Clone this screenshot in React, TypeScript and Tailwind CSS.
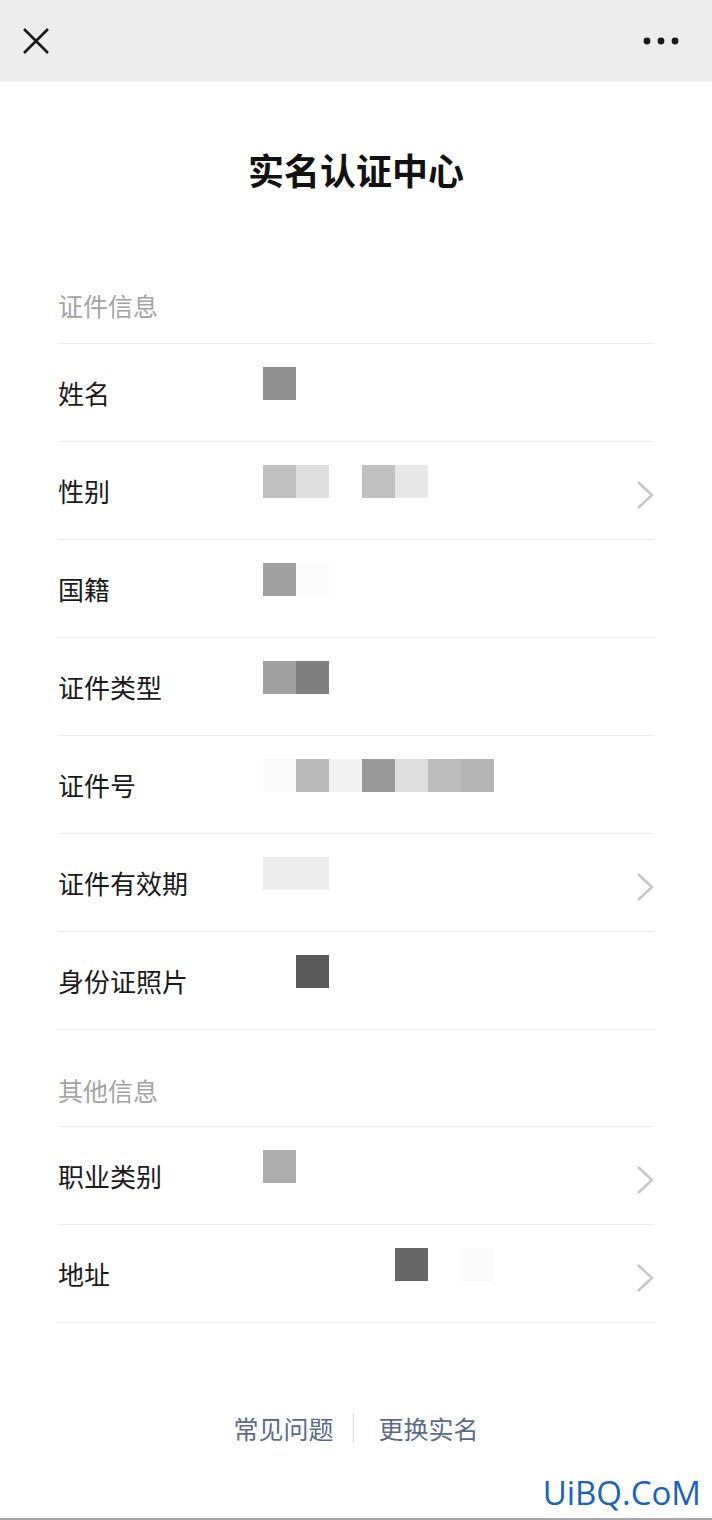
import React from 'react';

type Cell = { c: string };
type Row = { label: string; cells: Cell[]; arrow?: boolean };

const CJK = { fontFamily: '"Noto Sans CJK SC", "Noto Sans", sans-serif' };

const idRows: Row[] = [
  { label: '姓名', cells: [{ c: 'bg-[#8f8f8f]' }] },
  {
    label: '性别',
    arrow: true,
    cells: [{ c: 'bg-[#c0c0c0]' }, { c: 'bg-[#dedede]' }, { c: 'bg-white' }, { c: 'bg-[#c0c0c0]' }, { c: 'bg-[#e8e8e8]' }],
  },
  { label: '国籍', cells: [{ c: 'bg-[#a0a0a0]' }, { c: 'bg-[#fbfbfb]' }] },
  { label: '证件类型', cells: [{ c: 'bg-[#a0a0a0]' }, { c: 'bg-[#7f7f7f]' }] },
  {
    label: '证件号',
    cells: [
      { c: 'bg-[#fafafa]' },
      { c: 'bg-[#bbbbbb]' },
      { c: 'bg-[#f3f3f3]' },
      { c: 'bg-[#999999]' },
      { c: 'bg-[#dedede]' },
      { c: 'bg-[#bdbdbd]' },
      { c: 'bg-[#b5b5b5]' },
    ],
  },
  { label: '证件有效期', arrow: true, cells: [{ c: 'bg-[#ececec]' }, { c: 'bg-[#ececec]' }] },
  { label: '身份证照片', cells: [{ c: 'bg-white' }, { c: 'bg-[#595959]' }] },
];

const otherRows: Row[] = [
  { label: '职业类别', arrow: true, cells: [{ c: 'bg-[#adadad]' }] },
  {
    label: '地址',
    arrow: true,
    cells: [{ c: 'bg-white' }, { c: 'bg-white' }, { c: 'bg-white' }, { c: 'bg-white' }, { c: 'bg-[#666666]' }, { c: 'bg-white' }, { c: 'bg-[#fafafa]' }],
  },
];

const Chevron = () => (
  <svg width="18" height="30" viewBox="0 0 18 30" className="mt-2">
    <polyline points="2,2 16,15 2,28" fill="none" stroke="#c6c6c6" strokeWidth="2.5" strokeLinejoin="miter" />
  </svg>
);

const InfoRow = ({ row }: { row: Row }) => (
  <div className="flex items-center h-[98px] border-b border-[#ececec]">
    <div className="w-[205px] text-[26px] text-[#1a1a1a] leading-[30px]">{row.label}</div>
    <div className="flex flex-1 mb-[19px]">
      {row.cells.map((cell, i) => (
        <div key={i} className={`w-[33px] h-[33px] ${cell.c}`} />
      ))}
    </div>
    {row.arrow && <Chevron />}
  </div>
);

const SectionHeader = ({ title, first }: { title: string; first?: boolean }) => (
  <div
    className={`${first ? 'pt-[101px] pb-[23px]' : 'pt-[45px] pb-[21px]'} border-b border-[#ececec] text-[25px] leading-[30px] text-[#a3a3a3]`}
  >
    {title}
  </div>
);

const App: React.FC = () => {
  return (
    <div className="w-[712px] h-[1520px] bg-white flex flex-col" style={CJK}>
      {/* top bar */}
      <div className="h-[82px] bg-[#ededed] flex items-center justify-between px-[22px] shrink-0">
        <svg width="28" height="28" viewBox="0 0 28 28">
          <path d="M2 2 L26 26 M26 2 L2 26" stroke="#1a1a1a" strokeWidth="2.6" strokeLinecap="butt" />
        </svg>
        <svg width="38" height="10" viewBox="0 0 38 10" className="mr-[10px]">
          <circle cx="5" cy="5" r="3.4" fill="#1a1a1a" />
          <circle cx="19" cy="5" r="3.4" fill="#1a1a1a" />
          <circle cx="33" cy="5" r="3.4" fill="#1a1a1a" />
        </svg>
      </div>

      {/* title */}
      <div className="pt-[67px] text-center text-[36px] leading-[40px] font-bold text-[#111]">实名认证中心</div>

      <div className="px-[58px]">
        <SectionHeader title="证件信息" first />
        {idRows.map((r) => (
          <InfoRow key={r.label} row={r} />
        ))}
        <SectionHeader title="其他信息" />
        {otherRows.map((r) => (
          <InfoRow key={r.label} row={r} />
        ))}
      </div>

      {/* footer links */}
      <div className="mt-[90px] flex items-center justify-center text-[25px] leading-[30px] text-[#5c6b8a]">
        <span>常见问题</span>
        <span className="ml-[19px] mr-[25px] w-px h-[30px] bg-[#dcdcdc]" />
        <span>更换实名</span>
      </div>

      <div className="flex-1" />
      <div className="flex justify-end pr-[11px] pb-[6px]">
        <span className="text-[33px] leading-[38px] text-[#1862c0]" style={{ fontFamily: '"Open Sans", sans-serif' }}>
          UiBQ.CoM
        </span>
      </div>
      <div className="h-[2px] bg-[#a8a8a8] shrink-0" />
    </div>
  );
};

export default App;
